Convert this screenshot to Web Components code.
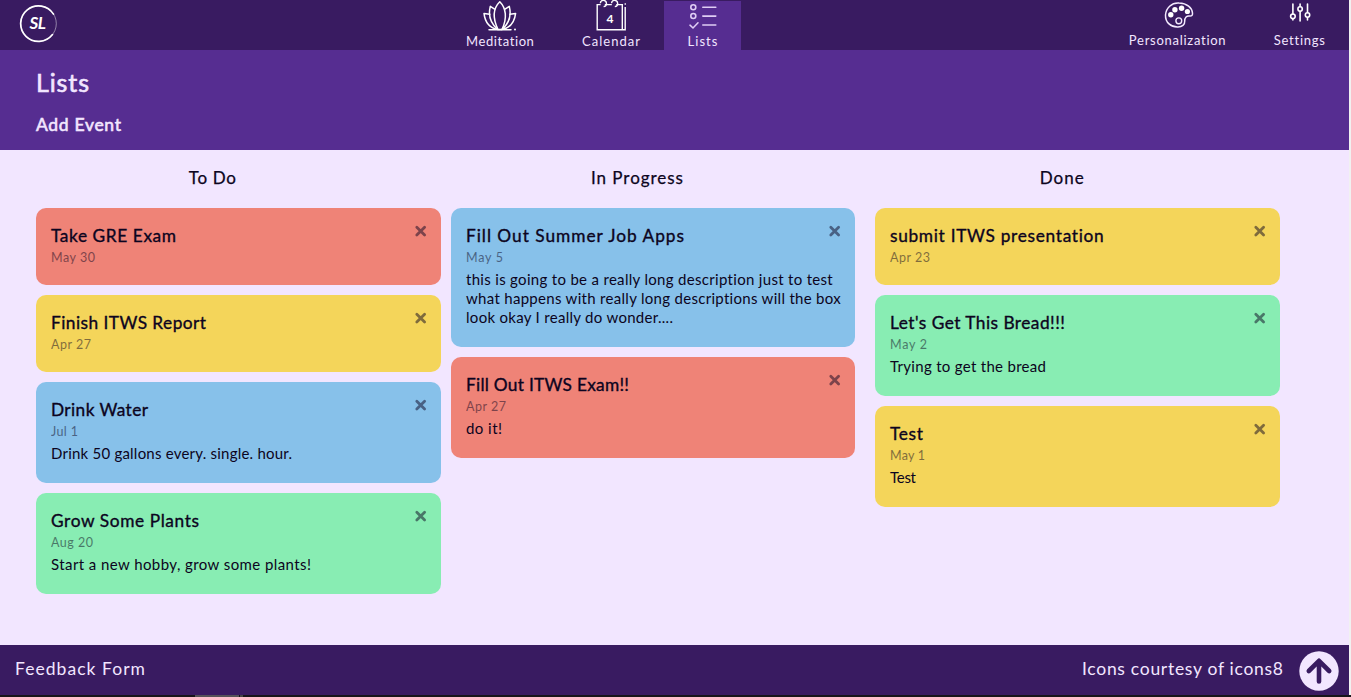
<!DOCTYPE html>
<html lang="en">
<head>
<meta charset="utf-8">
<title>Lists</title>
<style>
html,body{margin:0;height:100%;overflow:hidden}
body{background:#f1f1f1;font-family:Lato,"Open Sans",sans-serif;color:#0c0420}
</style>
</head>
<body>
<list-app></list-app>
<script>
const define=(name,html,setup)=>{
  const template=document.createElement('template');
  template.innerHTML=html;
  customElements.define(name,class extends HTMLElement{
    connectedCallback(){
      if(this.shadowRoot)return;
      this.attachShadow({mode:'open'}).append(template.content.cloneNode(true));
      if(setup)setup(this,this.shadowRoot);
    }
  });
};

/* One line of text tracked to the requested width. */
define('fit-text',`<style>:host{display:inline-block;white-space:pre}</style><span><slot></slot></span>`,(el,root)=>{
  const span=root.querySelector('span');
  const n=el.textContent.length;
  const ls=(Number(el.getAttribute('w'))-span.getBoundingClientRect().width)/(n-1);
  span.style.letterSpacing=ls+'px';
  span.style.marginRight=-ls+'px';
});

define('brand-logo',`<style>:host{display:block;width:40px;height:40px}svg{display:block}</style>
<svg width="40" height="40" viewBox="0 0 40 40"><circle cx="20.5" cy="19.600" r="17.8" fill="none" stroke="#fff" stroke-opacity=".45" stroke-width="1"/><path d="M35.500 10.100A17.8 17.8 0 1 0 34.500 30.600" fill="none" stroke="#fff" stroke-width="1.7" stroke-linecap="round"/><text x="11.5" y="25.200" font-family="Lato,sans-serif" font-style="italic" font-weight="700" font-size="17" textLength="16.500" fill="#fff">SL</text></svg>`);

const icons={
lotus:`<svg width="36" height="32" viewBox="0 0 36 32"><g fill="none" stroke="#fff" stroke-width="1.5" stroke-linejoin="round" stroke-linecap="round"><path d="M17.8 1.8C11.5 8 10.5 18 16 29.5h4C25.5 18 24 8 17.8 1.8Z"/><path d="M12.6 9.2 8.3 6.4C6.2 15 8 23 15.7 29.5M23 9.2l4.3-2.8c2.1 8.6.3 16.6-7.3 23.1"/><path d="M7.7 14.3 2 13.4C3 22 8 28 15.7 29.5M28 14.3l5.6-.9C32.6 22 27.7 28 20 29.5M7 29.7h22"/></g><circle cx="33" cy="29.6" r="1" fill="#fff"/></svg>`,
calendar:`<svg width="32" height="32" viewBox="0 0 32 32"><g fill="none" stroke="#fff" stroke-width="1.4"><path d="M5.6 4.6H2.2v25.2h28V7M9.8 4.6h7M21.3 4.6h6v25.2"/><path d="M5.3 3.2A3.1 3.1 0 1 1 8.6 6.6M16.5 3.2a3.1 3.1 0 1 1 3.3 3.4"/></g><path d="M30.2 3v2" stroke="#fff"/><text x="11.500" y="23.2" font-family="Lato,sans-serif" font-weight="700" font-size="12" fill="#fff">4</text></svg>`,
list:`<svg width="32" height="28" viewBox="0 0 32 28"><g fill="none" stroke="#dfcdf4" stroke-width="1.6" stroke-linecap="round"><circle cx="6.3" cy="4.2" r="2.5"/><circle cx="6.3" cy="13" r="2.5"/><path d="m3 22.2 3 2.8 5-5.2M15.8 4.3h13M15.8 13.1h13M15.8 22h13"/></g></svg>`,
palette:`<svg width="32" height="28" viewBox="0 0 32 28"><path d="M16 2C8.500 1.500 3 7 2.500 14c-.3 7.500 5.500 12.300 12.500 12 4-.2 7-2.300 6.700-5.600-.2-4 2.200-5.900 5-5.400 2 .2 3-.7 2.800-3C29 6.500 24 2.300 16 2Z" fill="none" stroke="#f4eaff" stroke-width="1.500"/><g fill="#fff"><circle cx="7.800" cy="13.800" r="2.700"/><circle cx="11.900" cy="8.700" r="2.700"/><circle cx="18.600" cy="7.300" r="2.700"/><circle cx="24.400" cy="10.500" r="2.600"/></g><circle cx="15.800" cy="19.800" r="2.900" fill="none" stroke="#f4eaff" stroke-width="1.400"/></svg>`,
sliders:`<svg width="24" height="22" viewBox="0 0 24 22"><g fill="none" stroke="#fff" stroke-width="1.6" stroke-linecap="round"><path d="M4.900 2v10M12.100 2v2.500M12.100 9.500V19M19.500 2v8.500M19.500 15.500v2.500M4.900 17v1"/><circle cx="4.900" cy="14.300" r="2.300"/><circle cx="12.100" cy="7" r="2.200"/><circle cx="19.500" cy="13" r="2.200"/></g></svg>`
};
define('nav-item',`<style>
:host{display:flex;flex-direction:column;align-items:center;height:50px;color:#f2e6ff;font-size:13px;line-height:16px;box-sizing:border-box}
.icon{flex:0 0 var(--icon-box,33px);display:flex;align-items:flex-start;padding-top:var(--icon-top,0);padding-left:var(--icon-left,0)}
.icon{box-sizing:border-box}svg{display:block}
:host([active]){background:#562d91;margin-top:1px;height:49px}
</style><div class="icon"></div><div><slot></slot></div>`,(el,root)=>{root.querySelector('.icon').innerHTML=icons[el.getAttribute('icon')]});

define('top-bar',`<style>
:host{display:flex;height:50px;background:#391b61;padding:0 24px 0 18px;box-sizing:border-box}
brand-logo{margin-top:4px}
nav{display:flex}.main{margin-left:392px}.side{margin-left:auto;gap:48px}
.a{width:100px}.b{width:106px;margin-left:8px}.c{width:77px}
</style>
<brand-logo></brand-logo>
<nav class="main">
<nav-item class="a" icon="lotus"><fit-text w="68">Meditation</fit-text></nav-item>
<nav-item class="b" icon="calendar"><fit-text w="58">Calendar</fit-text></nav-item>
<nav-item class="c" icon="list" active style="--icon-box:32px;--icon-top:2px"><fit-text w="30">Lists</fit-text></nav-item>
</nav>
<nav class="side">
<nav-item icon="palette" style="--icon-box:32px;--icon-top:1px;--icon-left:3px"><fit-text w="97">Personalization</fit-text></nav-item>
<nav-item icon="sliders" style="--icon-box:32px;--icon-top:2px;--icon-left:1px"><fit-text w="51">Settings</fit-text></nav-item>
</nav>`);

define('page-heading',`<style>
:host{display:block;height:100px;background:#562d91;color:#f2e6ff;padding:17px 36px 0;box-sizing:border-box;-webkit-text-stroke:.6px currentColor}
h1{margin:0;font-size:25px;line-height:30px;font-weight:400}
p{margin:17px 0 0;font-size:17.5px;line-height:22px}
</style><h1><slot></slot></h1><p><slot name="action"></slot></p>`);

define('task-card',`<style>
:host{display:block;position:relative;border-radius:10px;padding:18px 15px 17px;background:var(--card)}
:host([tone=red]){--card:#ef8377}:host([tone=yellow]){--card:#f4d55a}:host([tone=blue]){--card:#87c1ea}:host([tone=green]){--card:#88edb3}
h3{margin:0;font-size:17.3px;line-height:20px;height:20px;font-weight:400;-webkit-text-stroke:.35px currentColor}
.date{margin-top:2px;font-size:12.5px;line-height:20px;height:20px;opacity:.5}
::slotted([slot=text]){display:block;font-size:15px;line-height:19px;margin:2px 0 3px}
button{all:unset;position:absolute;right:14px;top:17px;width:13px;height:13px;opacity:.5}
svg{display:block}
</style><h3><slot name="title"></slot></h3><div class="date"><slot name="date"></slot></div><slot name="text"></slot>
<button aria-label="Remove"><svg width="13" height="13" viewBox="0 0 13 13"><path d="M2.800 2.200l7.800 7.800M10.600 2.200l-7.800 7.800" stroke="#0c0420" stroke-width="2.800" stroke-linecap="round"/></svg></button>`);

define('task-column',`<style>:host{display:flex;flex-direction:column;gap:10px}</style><slot></slot>`);

const card=(tone,title,tw,date,dw,...lines)=>`<task-card tone="${tone}"><fit-text slot="title" w="${tw}">${title}</fit-text><fit-text slot="date" w="${dw}">${date}</fit-text>${lines.length?`<div slot="text">${lines.map(l=>`<fit-text w="${l[1]}">${l[0]}</fit-text>`).join('<br>')}</div>`:''}</task-card>`;

define('task-board',`<style>
:host{display:block;background:#f2e6ff;flex:1}
.heads{display:grid;grid-template-columns:repeat(3,1fr);width:1274px;text-align:center;padding:17px 0 19px;font-size:17px;line-height:22px;-webkit-text-stroke:.25px currentColor}
.heads fit-text{justify-self:center}
.columns{display:grid;grid-template-columns:405px 404px 405px;column-gap:10px;padding-left:36px}
.columns task-column:last-child{margin:0 -10px 0 10px}
</style>
<div class="heads"><fit-text w="47">To Do</fit-text><fit-text w="92">In Progress</fit-text><fit-text w="44">Done</fit-text></div>
<div class="columns">
<task-column>${card('red','Take GRE Exam',125,'May 30',44)}${card('yellow','Finish ITWS Report',155,'Apr 27',40)}${card('blue','Drink Water',97,'Jul 1',27,['Drink 50 gallons every. single. hour.',241])}${card('green','Grow Some Plants',148,'Aug 20',42,['Start a new hobby, grow some plants!',260])}</task-column>
<task-column>${card('blue','Fill Out Summer Job Apps',218,'May 5',37,['this is going to be a really long description just to test',367],['what happens with really long descriptions will the box',375],['look okay I really do wonder....',207])}${card('red','Fill Out ITWS Exam!!',163,'Apr 27',40,['do it!',36])}</task-column>
<task-column>${card('yellow','submit ITWS presentation',214,'Apr 23',40)}${card('green',"Let's Get This Bread!!!",175,'May 2',37,['Trying to get the bread',156])}${card('yellow','Test',33,'May 1',35,['Test',26])}</task-column>
</div>`);

define('page-footer',`<style>
:host{display:flex;align-items:center;height:50px;background:#391b61;color:#f2e6ff;font-size:17.5px;line-height:22px;padding:0 10px 0 15px;box-sizing:border-box}
.credit{margin-left:auto;margin-right:16px}.t{padding-bottom:2px}svg{display:block;margin-top:1px}
</style>
<div class="t"><fit-text w="130">Feedback Form</fit-text></div>
<div class="t credit"><fit-text w="201">Icons courtesy of icons8</fit-text></div>
<svg width="40" height="40" viewBox="0 0 40 40"><circle cx="20" cy="20" r="19.700" fill="#f2e6ff"/><path d="M20 30.500V10.500M9.800 20 20 9.800 30.200 20" fill="none" stroke="#391b61" stroke-width="4.600" stroke-linecap="round" stroke-linejoin="round"/></svg>`);

define('window-edge',`<style>:host{display:flex;height:2px;background:#17141a;padding-left:195px}i{width:44px;background:#555158}i+i{width:3px;margin-left:1px;background:#444}</style><i></i><i></i>`);

define('list-app',`<style>
:host{display:flex;flex-direction:column;width:1351px;height:697px}
main{display:flex;flex-direction:column;flex:1;width:1349px}
</style>
<main>
<top-bar></top-bar>
<page-heading><fit-text w="53">Lists</fit-text><fit-text slot="action" w="85">Add Event</fit-text></page-heading>
<task-board></task-board>
<page-footer></page-footer>
</main>
<window-edge></window-edge>`);
</script>
</body>
</html>
